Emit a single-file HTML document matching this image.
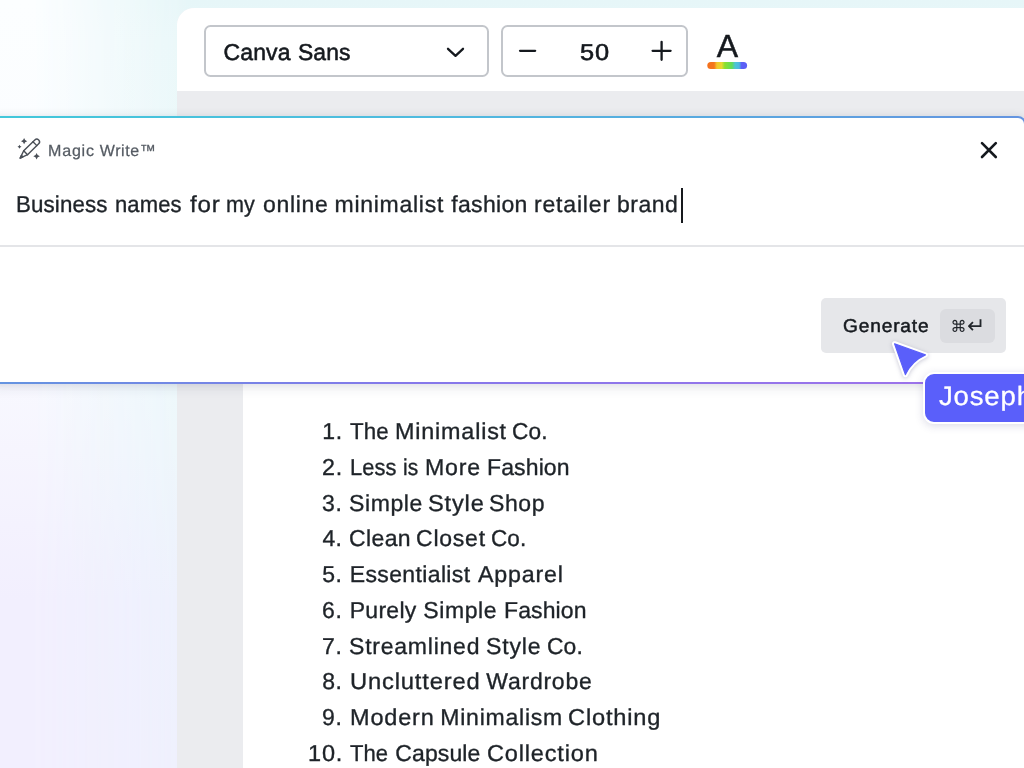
<!DOCTYPE html>
<html lang="en">
<head>
<meta charset="utf-8">
<title>Magic Write</title>
<style>
*{box-sizing:border-box;margin:0;padding:0}
html,body{width:1024px;height:768px;overflow:hidden}
body>*{will-change:transform}
body{font-family:"Liberation Sans",sans-serif;text-rendering:geometricPrecision;color:#1c2126;position:relative;background:#eef7fb}
.bg{position:absolute;left:0;top:0;width:1024px;height:768px;
  background:linear-gradient(180deg,#e6f6f8 0,#e9f7f9 40px,#ecf9fb 300px,#edf7fb 450px,#eef2fd 600px,#eff1fd 768px)}
.bg2{position:absolute;left:0;top:0;width:190px;height:768px;
  background:linear-gradient(180deg,#fcfeff 0,#fafcff 300px,#f6f5fe 450px,#f2effe 600px,#f2effe 768px);
  -webkit-mask-image:linear-gradient(90deg,#000 0,#000 30px,rgba(0,0,0,.12) 177px,transparent 190px);mask-image:linear-gradient(90deg,#000 0,#000 30px,rgba(0,0,0,.12) 177px,transparent 190px)}
.app{position:absolute;left:177px;top:8px;width:900px;height:800px;background:#ebecef;border-top-left-radius:17px;overflow:hidden}
.toolbar{position:absolute;left:0;top:0;width:100%;height:82.5px;background:#fff}
.page{position:absolute;left:66px;top:340px;width:900px;height:500px;background:#fff}
.box{position:absolute;border:2px solid #c3c6cb;border-radius:6.5px;background:#fff}
.fontbox{left:203.5px;top:24.8px;width:284.5px;height:52px}
.sizebox{left:500.8px;top:24.8px;width:187px;height:52px}
svg{position:absolute;overflow:visible}
.dialogwrap{position:absolute;left:-10px;top:116px;width:1035.5px;height:268px;border-radius:8px;
  background:linear-gradient(to bottom right,#42c8da 0,#4fbadf 22%,#6494e0 50%,#8578ea 70%,#a172ea 100%);
  box-shadow:0 5px 12px rgba(40,50,80,.08),0 0 10px rgba(40,50,80,.10)}
.dialog{position:absolute;left:2px;top:2px;right:2px;bottom:1.8px;background:#fff;border-radius:6px}
.caret{position:absolute;left:680.6px;top:187.5px;width:2.2px;height:35px;background:#16191d}
.divider{position:absolute;left:0;top:245px;width:1024px;height:1.5px;background:#e4e5e8}
.gen{position:absolute;left:821px;top:298px;width:185px;height:55px;background:#e6e7ea;border-radius:5px}
.kbd{position:absolute;left:939.5px;top:309px;width:55.3px;height:33.8px;border-radius:6px;background:#dbdce0}
.joseph{position:absolute;left:922.5px;top:371.8px;width:140px;height:52.2px;border:2.5px solid #fff;border-radius:11px;background:#5a5ffa;box-shadow:0 2px 8px rgba(60,60,120,.18)}
.txt{position:absolute;left:0;top:0;width:1024px;height:768px;list-style:none}
.txt span{position:absolute;line-height:60px;height:60px;white-space:nowrap;transform-origin:0 50%}
.c-ui{color:#15191e;-webkit-text-stroke:.55px #15191e}
.c-mw{color:#555b63;-webkit-text-stroke:.25px #555b63}
.c-body{color:#1e2328;-webkit-text-stroke:.35px #1e2328}
.c-gen{color:#171b20;-webkit-text-stroke:.5px #171b20}
.c-jos{color:#fff;-webkit-text-stroke:.3px #fff}
.c-A{color:#15191e;-webkit-text-stroke:.5px #15191e}
.c-kbd{color:#22262b;font-family:"DejaVu Sans","Liberation Sans",sans-serif}
</style>
</head>
<body>
<div class="bg"></div>
<div class="bg2"></div>

<div class="app">
  <div class="toolbar"></div>
  <div class="page"></div>
</div>
<div class="box fontbox"></div>
<div class="box sizebox"></div>
<div class="txt c-ui"><span style="left:223.47px;top:22.00px;letter-spacing:0.133px;font-size:23px;">Canva</span> <span style="left:297.72px;top:22.00px;letter-spacing:0.100px;transform:scale(0.9940,1.000);font-size:23px;">Sans</span> <span style="left:579.60px;top:22.00px;letter-spacing:0.800px;transform:scale(1.1047,1.000);font-size:23px;">50</span></div>
<div class="txt c-A"><span style="left:716.66px;top:16.00px;letter-spacing:0.000px;font-size:32px;">A</span></div>

<div class="dialogwrap"><div class="dialog"></div></div>
<div class="txt c-mw"><span style="left:48.10px;top:122.00px;letter-spacing:0.800px;transform:scale(1.0028,1.000);font-size:16px;">Magic</span> <span style="left:99.76px;top:122.00px;letter-spacing:0.588px;font-size:16px;">Write™</span></div>
<div class="txt c-body"><span style="left:15.93px;top:174.00px;letter-spacing:0.100px;transform:scale(0.9720,1.000);font-size:23px;">Business</span> <span style="left:115.29px;top:174.00px;letter-spacing:0.100px;transform:scale(0.9576,1.000);font-size:23px;">names</span> <span style="left:190.00px;top:174.00px;letter-spacing:0.800px;transform:scale(1.0490,1.000);font-size:23px;">for</span> <span style="left:225.81px;top:174.00px;letter-spacing:0.100px;transform:scale(0.9385,1.000);font-size:23px;">my</span> <span style="left:262.90px;top:174.00px;letter-spacing:0.720px;font-size:23px;">online</span> <span style="left:334.50px;top:174.00px;letter-spacing:0.734px;font-size:23px;">minimalist</span> <span style="left:451.25px;top:174.00px;letter-spacing:0.333px;font-size:23px;">fashion</span> <span style="left:534.00px;top:174.00px;letter-spacing:0.800px;transform:scale(1.0023,1.000);font-size:23px;">retailer</span> <span style="left:617.00px;top:174.00px;letter-spacing:0.500px;font-size:23px;">brand</span></div>
<div class="caret"></div>
<div class="divider"></div>
<div class="gen"></div>
<div class="kbd"></div>
<div class="txt c-kbd"><span style="left:950.5px;top:297px;font-size:16px">⌘</span><span style="left:967.1px;top:296.6px;font-size:22px">↵</span></div>
<div class="txt c-gen"><span style="left:842.79px;top:296.00px;letter-spacing:0.800px;transform:scale(1.0347,1.000);font-size:18.5px;">Generate</span></div>
<div class="joseph"></div>
<div class="txt c-jos"><span style="left:938.50px;top:366.00px;letter-spacing:0.800px;transform:scale(1.0396,1.000);font-size:26.5px;">Joseph</span></div>

<svg class="icons" style="left:0;top:0" width="1024" height="768" viewBox="0 0 1024 768">
  <defs>
    <linearGradient id="rb" x1="0" x2="1" y1="0" y2="0">
      <stop offset="0" stop-color="#f4701c"/><stop offset="0.17" stop-color="#f4761c"/>
      <stop offset="0.24" stop-color="#f3c62c"/><stop offset="0.36" stop-color="#e6d92e"/>
      <stop offset="0.44" stop-color="#8be02c"/><stop offset="0.62" stop-color="#5fdc5c"/>
      <stop offset="0.7" stop-color="#4cc4d6"/><stop offset="0.8" stop-color="#4cb8e0"/>
      <stop offset="0.86" stop-color="#5b60f6"/><stop offset="1" stop-color="#5b5ff5"/>
    </linearGradient>
  </defs>
  <path d="M448 48.8 L455.5 55.8 L463 48.8" fill="none" stroke="#15191e" stroke-width="2.3" stroke-linecap="round" stroke-linejoin="round"/>
  <path d="M520 50.8 H535.2" stroke="#15191e" stroke-width="2.2" stroke-linecap="round"/>
  <path d="M652.6 50.8 H670.6 M661.6 41.8 V59.8" stroke="#15191e" stroke-width="2.3" stroke-linecap="round"/>
  <rect x="707.3" y="62" width="39.8" height="7" rx="3.5" fill="url(#rb)"/>
  <path d="M982 143.2 L995.8 157 M995.8 143.2 L982 157" stroke="#15191e" stroke-width="2.6" stroke-linecap="round"/>
  <g fill="none" stroke="#4a4f57" stroke-width="1.4" stroke-linejoin="round" stroke-linecap="round" transform="translate(20.2 158.1) rotate(-44.5)">
    <path d="M0 0 L7.6 -2.75 L23.2 -2.75 A2.75 2.75 0 0 1 23.2 2.75 L7.6 2.75 Z"/>
    <path d="M7.6 -2.75 V2.75 M20.6 -2.75 V2.75"/>
    <path d="M0 0 L2.8 -1 V1 Z" fill="#4a4f57"/>
  </g>
  <g fill="#4a4f57">
    <path d="M24.1 138.1 Q24.66 140.64 27.200000000000003 141.2 Q24.66 141.76 24.1 144.29999999999998 Q23.54 141.76 21.0 141.2 Q23.54 140.64 24.1 138.1Z"/>
    <path d="M19.5 144.7 Q19.86 146.34 21.5 146.7 Q19.86 147.06 19.5 148.7 Q19.14 147.06 17.5 146.7 Q19.14 146.34 19.5 144.7Z"/>
    <path d="M36.6 152.89999999999998 Q37.19 155.61 39.9 156.2 Q37.19 156.79 36.6 159.5 Q36.01 156.79 33.300000000000004 156.2 Q36.01 155.61 36.6 152.89999999999998Z"/>
  </g>
  <path d="M894.6 343.8 L925.4 354.9 Q911.5 361 905.4 374.6 Z" fill="#5a5ffa" stroke="#fff" stroke-width="5.2" stroke-linejoin="round" style="filter:drop-shadow(0 1px 2px rgba(40,40,90,.25))"/>
  <path d="M894.6 343.8 L925.4 354.9 Q911.5 361 905.4 374.6 Z" fill="#5a5ffa" stroke="#5a5ffa" stroke-width="1.2" stroke-linejoin="round"/>
</svg>

<ol class="txt c-body">
<li><span style="left:322.20px;top:401.00px;letter-spacing:0.749px;font-size:23px;">1.</span> <span style="left:349.50px;top:401.00px;letter-spacing:0.100px;transform:scale(0.9694,1.000);font-size:23px;">The</span> <span style="left:395.23px;top:401.00px;letter-spacing:0.800px;transform:scale(1.0153,1.000);font-size:23px;">Minimalist</span> <span style="left:512.01px;top:401.00px;letter-spacing:0.100px;transform:scale(0.9864,1.000);font-size:23px;">Co.</span></li>
<li><span style="left:321.76px;top:437.00px;letter-spacing:0.800px;transform:scale(1.0107,1.000);font-size:23px;">2.</span> <span style="left:349.80px;top:437.00px;letter-spacing:0.100px;transform:scale(0.9514,1.000);font-size:23px;">Less</span> <span style="left:402.84px;top:437.00px;letter-spacing:0.100px;transform:scale(0.9106,1.000);font-size:23px;">is</span> <span style="left:425.24px;top:437.00px;letter-spacing:0.800px;transform:scale(1.0066,1.000);font-size:23px;">More</span> <span style="left:487.00px;top:437.00px;letter-spacing:0.125px;font-size:23px;">Fashion</span></li>
<li><span style="left:321.92px;top:473.00px;letter-spacing:0.800px;font-size:23px;">3.</span> <span style="left:349.05px;top:473.00px;letter-spacing:0.590px;font-size:23px;">Simple</span> <span style="left:427.78px;top:473.00px;letter-spacing:0.800px;transform:scale(1.0268,1.000);font-size:23px;">Style</span> <span style="left:489.05px;top:473.00px;letter-spacing:0.566px;font-size:23px;">Shop</span></li>
<li><span style="left:322.50px;top:508.00px;letter-spacing:0.249px;font-size:23px;">4.</span> <span style="left:349.00px;top:508.00px;letter-spacing:0.375px;font-size:23px;">Clean</span> <span style="left:416.00px;top:508.00px;letter-spacing:0.772px;font-size:23px;">Closet</span> <span style="left:491.02px;top:508.00px;letter-spacing:0.100px;transform:scale(0.9789,1.000);font-size:23px;">Co.</span></li>
<li><span style="left:322.15px;top:544.00px;letter-spacing:0.604px;font-size:23px;">5.</span> <span style="left:349.75px;top:544.00px;letter-spacing:0.364px;font-size:23px;">Essentialist</span> <span style="left:478.04px;top:544.00px;letter-spacing:0.800px;transform:scale(1.0110,1.000);font-size:23px;">Apparel</span></li>
<li><span style="left:322.00px;top:580.00px;letter-spacing:0.749px;font-size:23px;">6.</span> <span style="left:349.75px;top:580.00px;letter-spacing:0.269px;font-size:23px;">Purely</span> <span style="left:423.30px;top:580.00px;letter-spacing:0.590px;font-size:23px;">Simple</span> <span style="left:504.00px;top:580.00px;letter-spacing:0.100px;font-size:23px;">Fashion</span></li>
<li><span style="left:322.00px;top:616.00px;letter-spacing:0.749px;font-size:23px;">7.</span> <span style="left:349.05px;top:616.00px;letter-spacing:0.770px;font-size:23px;">Streamlined</span> <span style="left:486.05px;top:616.00px;letter-spacing:0.800px;transform:scale(1.0029,1.000);font-size:23px;">Style</span> <span style="left:546.51px;top:616.00px;letter-spacing:0.100px;transform:scale(0.9940,1.000);font-size:23px;">Co.</span></li>
<li><span style="left:322.13px;top:651.00px;letter-spacing:0.620px;font-size:23px;">8.</span> <span style="left:349.72px;top:651.00px;letter-spacing:0.800px;transform:scale(1.0328,1.000);font-size:23px;">Uncluttered</span> <span style="left:486.28px;top:651.00px;letter-spacing:0.768px;font-size:23px;">Wardrobe</span></li>
<li><span style="left:322.04px;top:687.00px;letter-spacing:0.706px;font-size:23px;">9.</span> <span style="left:349.73px;top:687.00px;letter-spacing:0.800px;transform:scale(1.0219,1.000);font-size:23px;">Modern</span> <span style="left:440.25px;top:687.00px;letter-spacing:0.778px;font-size:23px;">Minimalism</span> <span style="left:568.22px;top:687.00px;letter-spacing:0.800px;transform:scale(1.0274,1.000);font-size:23px;">Clothing</span></li>
<li><span style="left:307.73px;top:723.00px;letter-spacing:0.800px;transform:scale(1.0212,1.000);font-size:23px;">10.</span> <span style="left:350.00px;top:723.00px;letter-spacing:0.100px;transform:scale(0.9566,1.000);font-size:23px;">The</span> <span style="left:395.25px;top:723.00px;letter-spacing:0.125px;font-size:23px;">Capsule</span> <span style="left:486.98px;top:723.00px;letter-spacing:0.800px;transform:scale(1.0240,1.000);font-size:23px;">Collection</span></li>
</ol>
</body>
</html>
